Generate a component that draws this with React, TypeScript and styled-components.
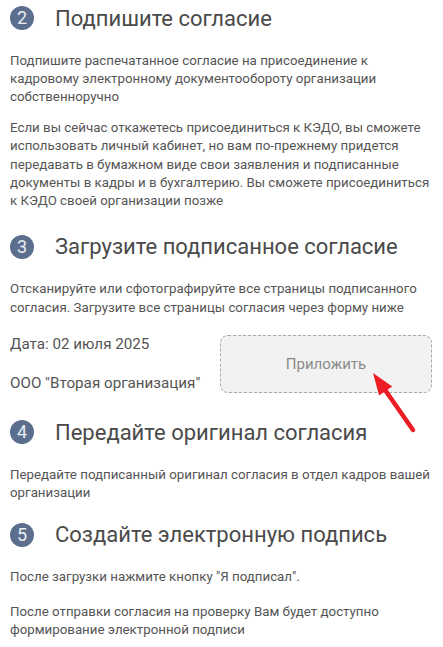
import * as React from 'react'
import styled, { createGlobalStyle } from 'styled-components'

const GlobalStyle = createGlobalStyle`
  html, body {
    margin: 0;
    padding: 0;
    background: #fff;
  }
  body {
    font-family: Roboto, 'Liberation Sans', Arial, sans-serif;
    color: #555;
  }
`

const Page = styled.div`
  width: 443px;
  box-sizing: border-box;
  padding: 6px 12px 0 10px;
`

const Step = styled.section<{ offset?: number }>`
  display: flex;
  flex-direction: column;
  margin-top: ${(p) => p.offset ?? 0}px;
`

const StepHeader = styled.div`
  display: flex;
  align-items: center;
  gap: 21px;
  height: 24px;
`

const Badge = styled.span`
  flex: 0 0 24px;
  width: 24px;
  height: 24px;
  border-radius: 50%;
  background: #5b6e8e;
  color: #e9edf3;
  font-size: 18px;
  line-height: 24px;
  text-align: center;
`

const StepTitle = styled.h3`
  margin: 0;
  font-size: 22px;
  font-weight: 400;
  color: #4a4a4a;
  white-space: nowrap;
`

const Text = styled.p<{ gap?: number }>`
  margin: ${(p) => p.gap ?? 21.5}px 0 0 0;
  font-size: 13.3px;
  line-height: 18.4px;
  color: #555;
`

const SignRow = styled.div`
  position: relative;
  display: flex;
  align-items: flex-start;
  margin-top: 17.7px;
`

const SignInfo = styled.div`
  display: flex;
  flex-direction: column;
  gap: 21.3px;
  font-size: 15.2px;
  line-height: 18px;
  color: #555;
`

const AttachButton = styled.button`
  margin-left: auto;
  margin-right: -1px;
  width: 212px;
  height: 58px;
  border: 1px dashed #a9a9a9;
  border-radius: 8px;
  background: #f2f2f2;
  color: #8a8a8a;
  font-family: Roboto, 'Liberation Sans', Arial, sans-serif;
  font-size: 15px;
  cursor: pointer;
`

const Pointer = styled.svg`
  position: absolute;
  left: 350px;
  top: 30px;
  pointer-events: none;
`

const steps = [
  { n: 2, title: 'Подпишите согласие' },
  { n: 3, title: 'Загрузите подписанное согласие' },
  { n: 4, title: 'Передайте оригинал согласия' },
  { n: 5, title: 'Создайте электронную подпись' },
]

const Header: React.FC<{ n: number; title: string }> = ({ n, title }) => (
  <StepHeader>
    <Badge>{n}</Badge>
    <StepTitle>{title}</StepTitle>
  </StepHeader>
)

const App: React.FunctionComponent = () => {
  return (
    <Page>
      <GlobalStyle />
      <Step>
        <Header {...steps[0]} />
        <Text>
          Подпишите распечатанное согласие на присоединение к кадровому электронному документообороту
          организации собственноручно
        </Text>
        <Text gap={12}>
          Если вы сейчас откажетесь присоединиться к КЭДО, вы сможете использовать личный кабинет, но вам
          по-прежнему придется передавать в бумажном виде свои заявления и подписанные документы в кадры и в
          бухгалтерию. Вы сможете присоединиться к КЭДО своей организации позже
        </Text>
      </Step>

      <Step offset={24}>
        <Header {...steps[1]} />
        <Text>
          Отсканируйте или сфотографируйте все страницы подписанного согласия. Загрузите все страницы согласия
          через форму ниже
        </Text>
        <SignRow>
          <SignInfo>
            <span>Дата: 02 июля 2025</span>
            <span>ООО "Вторая организация"</span>
          </SignInfo>
          <AttachButton type='button'>Приложить</AttachButton>
          {/* red pointer drawn over the button */}
          <Pointer width='60' height='70' viewBox='0 0 60 70'>
            <line x1='53' y1='65' x2='23' y2='22' stroke='#ee1c24' strokeWidth='4.5' strokeLinecap='round' />
            <polygon points='13,8 32.2,21.4 19.1,30.6' fill='#ee1c24' />
          </Pointer>
        </SignRow>
      </Step>

      <Step offset={27.7}>
        <Header {...steps[2]} />
        <Text>Передайте подписанный оригинал согласия в отдел кадров вашей организации</Text>
      </Step>

      <Step offset={20}>
        <Header {...steps[3]} />
        <Text>После загрузки нажмите кнопку "Я подписал".</Text>
        <Text gap={16}>После отправки согласия на проверку Вам будет доступно формирование электронной подписи</Text>
      </Step>
    </Page>
  )
}

export default App
